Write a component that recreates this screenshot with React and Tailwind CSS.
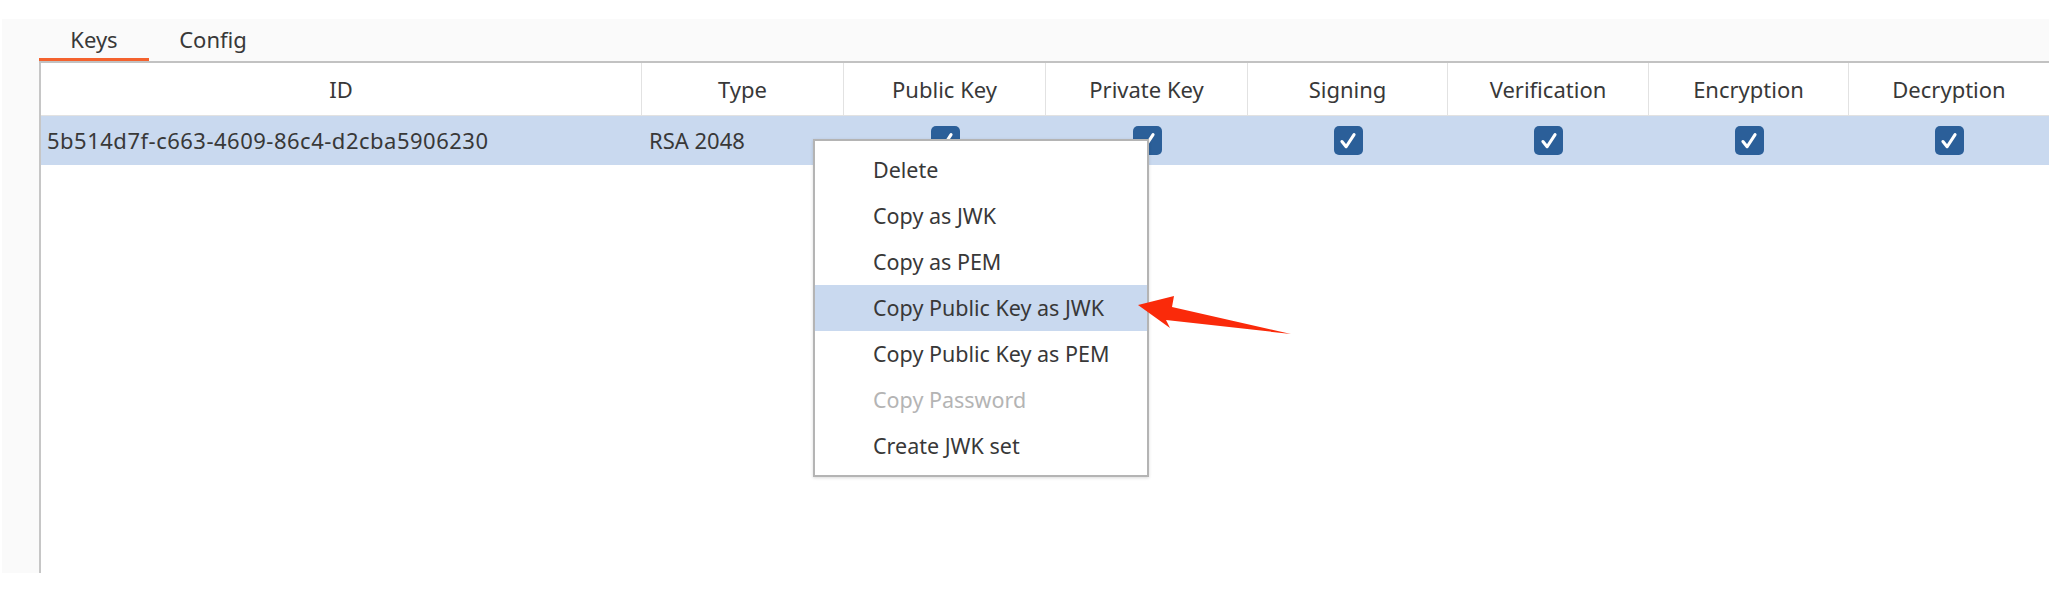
const columns = [
  { label: 'ID', w: 'w-[601px]' },
  { label: 'Type', w: 'w-[202px]' },
  { label: 'Public Key', w: 'w-[202px]' },
  { label: 'Private Key', w: 'w-[202px]' },
  { label: 'Signing', w: 'w-[200px]' },
  { label: 'Verification', w: 'w-[201px]' },
  { label: 'Encryption', w: 'w-[200px]' },
  { label: 'Decryption', w: 'w-[200px]' },
];

const menuItems = [
  { label: 'Delete' },
  { label: 'Copy as JWK' },
  { label: 'Copy as PEM' },
  { label: 'Copy Public Key as JWK', active: true },
  { label: 'Copy Public Key as PEM' },
  { label: 'Copy Password', disabled: true },
  { label: 'Create JWK set' },
];

function Checkbox() {
  return (
    <div className="w-[29px] h-[29px] rounded-[5px] bg-[#2b5f99] flex items-center justify-center">
      <svg width="22" height="22" viewBox="0 0 20 20">
        <path d="M4.5 10.5 L8.3 15.2 L15.5 4.2" fill="none" stroke="white" strokeWidth="2.8" strokeLinecap="round" strokeLinejoin="round" />
      </svg>
    </div>
  );
}

export default function App() {
  return (
    <div
      className="relative w-[2064px] h-[616px] bg-white pt-[19px] pl-[2px] text-[#383838]"
      style={{ fontFamily: '"Noto Sans", "Open Sans", sans-serif' }}
    >
      <div className="w-[2047px] h-[554px] bg-[#fafafa] flex flex-col">
        {/* tabs */}
        <div className="h-[42px] pl-[37px] flex items-stretch text-[22px]">
          <div className="w-[110px] flex items-center justify-center border-b-[3px] border-[#f4622e] pt-[1px]">Keys</div>
          <div className="w-[128px] flex items-center justify-center border-b-[3px] border-transparent pt-[1px]">Config</div>
        </div>
        <div className="ml-[37px] h-[2px] bg-[#c2c2c2]" />

        {/* table */}
        <div className="ml-[37px] flex-1 bg-white border-l-2 border-[#c6c6c6] text-[22px]">
          <div className="flex h-[53px] border-b border-[#e2e2e2]">
            {columns.map((c, i) => (
              <div
                key={c.label}
                className={`${c.w} flex items-center justify-center ${i < columns.length - 1 ? 'border-r border-[#e2e2e2]' : ''}`}
              >
                {c.label}
              </div>
            ))}
          </div>
          <div className="flex h-[49px] bg-[#c9d9ef]">
            <div className="w-[601px] flex items-center pl-[6px] tracking-[0.5px]">5b514d7f-c663-4609-86c4-d2cba5906230</div>
            <div className="w-[202px] flex items-center pl-[7px]">RSA 2048</div>
            {columns.slice(2).map((c) => (
              <div key={c.label} className={`${c.w} flex items-center justify-center`}>
                <Checkbox />
              </div>
            ))}
          </div>
        </div>
      </div>

      {/* context menu */}
      <div className="absolute left-[813px] top-[139px] w-[336px] bg-white border-2 border-[#b4b4b4] py-[6px] text-[21.5px] shadow-[0_1px_3px_rgba(0,0,0,0.15)]">
        {menuItems.map((m) => (
          <div
            key={m.label}
            className={`h-[46px] flex items-center pl-[58px] ${m.active ? 'bg-[#c9d9ef]' : ''} ${m.disabled ? 'text-[#b4b4b4]' : 'text-[#383838]'}`}
          >
            {m.label}
          </div>
        ))}
      </div>

      {/* annotation arrow */}
      <svg className="absolute left-0 top-0 pointer-events-none" width="2064" height="616">
        <polygon
          points="1138,305 1174,296 1172,307 1291,334 1166,320 1170,328"
          fill="#fa2a0a"
        />
      </svg>
    </div>
  );
}
